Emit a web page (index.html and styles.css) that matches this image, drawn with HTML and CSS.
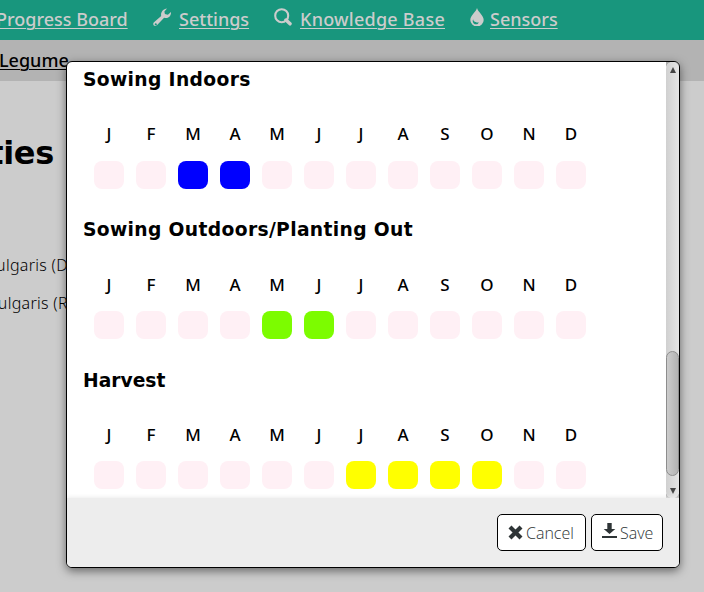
FILE: index.html
```html
<!DOCTYPE html>
<html lang="en">
<head>
<meta charset="utf-8">
<title>Varieties</title>
<link rel="stylesheet" href="styles.css">
</head>
<body>
<nav class="nav">
  <a class="progress"><span>Progress Board</span></a>
  <a class="settings"><svg viewBox="0 0 18 18"><path d="M1 14.2 8.2 8C7.4 4.2 10 0.8 14 .4L11.4 3.4l.5 2.7 3 .6L18 4c.3 4-3 7.1-6.9 5.8L4.2 17.1C1.7 19.3-1.2 16.5 1 14.2Zm.8 1.8a1 1 0 1 0 1.9-.2 1 1 0 0 0-1.9.2Z" fill-rule="evenodd"/></svg><span>Settings</span></a>
  <a class="knowledge"><svg viewBox="0 0 18 18"><path d="m12 12 4 3.8" stroke="#ccc" stroke-width="3.5" stroke-linecap="round"/><circle cx="7.7" cy="7.7" r="6.5" fill="none" stroke="#ccc" stroke-width="2.1"/></svg><span>Knowledge Base</span></a>
  <a class="sensors"><svg viewBox="0 0 14 18"><path fill-rule="evenodd" d="M7 0C8 4 13.7 7.5 13.7 12A6.7 6.5 0 0 1 .3 12C.3 7.5 6 4 7 0ZM3.1 11.2c-1.4 3 1 5.6 4 5.1 1.2-.3 1.5-1.2 1.3-2.4-.6.8-1.8.9-2.5 0-1.1.2-2.5-.8-2.8-2.7Z"/></svg><span>Sensors</span></a>
</nav>
<div class="crumbs"><a>Legume</a></div>
<main class="page">
  <h1>Varieties</h1>
  <p>Phaseolus vulgaris (D</p>
  <p>Phaseolus vulgaris (R</p>
</main>
<section class="dialog">
  <div class="scroller">
    <div class="content">
      <h2>Sowing Indoors</h2>
      <div class="months"><b>J</b><b>F</b><b>M</b><b>A</b><b>M</b><b>J</b><b>J</b><b>A</b><b>S</b><b>O</b><b>N</b><b>D</b><i></i><i></i><i class="blue"></i><i class="blue"></i><i></i><i></i><i></i><i></i><i></i><i></i><i></i><i></i></div>
      <h2>Sowing Outdoors/Planting Out</h2>
      <div class="months low"><b>J</b><b>F</b><b>M</b><b>A</b><b>M</b><b>J</b><b>J</b><b>A</b><b>S</b><b>O</b><b>N</b><b>D</b><i></i><i></i><i></i><i></i><i class="green"></i><i class="green"></i><i></i><i></i><i></i><i></i><i></i><i></i></div>
      <h2 class="harvest">Harvest</h2>
      <div class="months low"><b>J</b><b>F</b><b>M</b><b>A</b><b>M</b><b>J</b><b>J</b><b>A</b><b>S</b><b>O</b><b>N</b><b>D</b><i></i><i></i><i></i><i></i><i></i><i></i><i class="yellow"></i><i class="yellow"></i><i class="yellow"></i><i class="yellow"></i><i></i><i></i></div>
    </div>
    <div class="bar">
      <svg class="arrow" viewBox="0 0 6 6"><path d="M3 0 6 6H0Z"/></svg>
      <div class="thumb"></div>
      <svg class="arrow" viewBox="0 0 6 6"><path d="M0 0H6L3 6Z"/></svg>
    </div>
  </div>
  <footer class="footer">
    <button class="cancel"><svg viewBox="0 0 15 15"><path d="m2 2 11 11M13 2 2 13" stroke="#2e3436" stroke-width="4.2"/></svg><span>Cancel</span></button>
    <button class="save"><svg viewBox="0 0 15 15"><path d="M5.3 0h4.4v6h3.6L7.5 11 1.7 6h3.6ZM0 13h15v2H0Z"/></svg><span>Save</span></button>
  </footer>
</section>
</body>
</html>
```
FILE: styles.css
```css
* { box-sizing: border-box; }
body { margin: 0; width: 704px; height: 592px; overflow: hidden; background: #ccc; color: #000; font-family: "DejaVu Sans", sans-serif; }
.nav { height: 40px; background: #18967d; color: #ccc; fill: #ccc; display: flex; gap: 24px; font: 500 18px/38px "Noto Sans", sans-serif; white-space: nowrap; }
.nav a { display: flex; gap: 8px; flex: none; }
.nav svg { width: 18px; height: 18px; margin-top: 8px; }
.nav span, .crumbs a { text-decoration: underline; text-decoration-thickness: 1px; text-underline-offset: 2px; }
.progress { width: 133px; margin-left: -4px; }
.settings { width: 97px; }
.knowledge { width: 172px; }
.knowledge span { letter-spacing: .25px; }
.nav .sensors { gap: 6px; }
.sensors svg { width: 14px; }
.crumbs { height: 41px; background: #b3b3b3; font: 500 18px/40px "Noto Sans", sans-serif; }
.crumbs a { margin-left: -1px; }
.page { width: 200px; margin-left: -146px; text-align: right; font-size: 16px; white-space: nowrap; }
h1 { margin: 52px 0 0; font-size: 32px; line-height: 40px; letter-spacing: -.3px; }
.page p { margin: 0 -14px 0 0; line-height: 38px; font: 300 16px/38px "Noto Sans", sans-serif; letter-spacing: .3px; }
.page h1 + p { margin-top: 73px; }
.dialog { position: absolute; left: 66px; top: 61px; width: 614px; height: 507px; border: 1px solid #000; border-radius: 6px; overflow: hidden; background: #fff; box-shadow: 0 3px 10px rgba(0,0,0,.5); }
.scroller { display: flex; height: 436px; overflow: hidden; }
.content { flex: 1; padding-left: 16px; }
h2 { margin: 6px 0 0; height: 24px; font-size: 18.7px; line-height: 24px; letter-spacing: .35px; }
.harvest { margin-top: 7px; letter-spacing: 0; }
.months { display: grid; grid-template-columns: repeat(12, 30px); grid-template-rows: 24px 28px; column-gap: 12px; row-gap: 15px; margin: 30px 0 0 11px; padding-bottom: 23px; }
.months.low { margin-top: 31px; row-gap: 14px; }
.harvest + .months.low { margin-top: 30px; }
.months b { font: 500 17px/24px "Noto Sans", sans-serif; text-align: center; }
.months i { background: #fff0f5; border-radius: 8px; }
.months .blue { background: #00f; }
.months .green { background: #7cfc00; }
.months .yellow { background: #ff0; }
.bar { width: 13px; background: linear-gradient(90deg, #d0d0d0, #e5e5e5); border-radius: 7px; box-shadow: 0 0 0 4px #aaa; clip-path: inset(0); display: flex; flex-direction: column; align-items: center; }
.arrow { width: 6px; height: 6px; margin-top: 5px; fill: #444; }
.thumb { width: 13px; height: 125px; margin: 278px 0 7px; border: 1px solid #8d8d8d; border-radius: 7px; background: linear-gradient(90deg, #ccc, #b2b2b2); }
.footer { position: relative; height: 69px; padding: 16px; background: #ededed; box-shadow: 0 -1px 4px #ededed; display: flex; justify-content: flex-end; gap: 5px; }
button { height: 37px; border: 1px solid #000; border-radius: 5px; background: #fff; color: #2e3436; fill: #2e3436; padding: 0 10px; display: flex; align-items: center; gap: 3px; font: 300 16px "Open Sans", sans-serif; white-space: nowrap; }
button svg { width: 15px; height: 15px; flex: none; }
.cancel { width: 89px; }
.save { width: 72px; }
.save svg { margin-top: -4px; }
```
